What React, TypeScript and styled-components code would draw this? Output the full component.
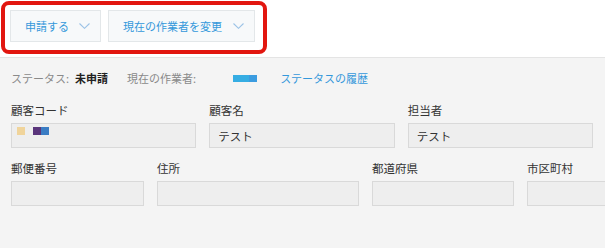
import React from 'react';
import styled, { createGlobalStyle } from 'styled-components';

const GlobalStyle = createGlobalStyle`
  html, body {
    margin: 0;
    padding: 0;
    background: #f4f4f4;
    font-family: "Noto Sans CJK JP", "Noto Sans", sans-serif;
    color: #333;
  }
`;

const Page = styled.div`
  width: 605px;
  height: 248px;
  overflow: hidden;
  background: #f4f4f4;
`;

const Toolbar = styled.div`
  position: relative;
  display: flex;
  gap: 7px;
  height: 58px;
  box-sizing: border-box;
  padding: 10px 10px 0;
  background: #fff;
  border-bottom: 1px solid #e4e4e4;
`;

// annotation frame drawn over the toolbar buttons
const Highlight = styled.div`
  position: absolute;
  left: 1px;
  top: 1px;
  width: 266px;
  height: 53px;
  box-sizing: border-box;
  border: 4px solid #e2160f;
  border-radius: 8px;
  pointer-events: none;
`;

const ActionButton = styled.button<{ width: number }>`
  display: flex;
  align-items: center;
  justify-content: space-between;
  width: ${(p) => p.width}px;
  height: 32px;
  box-sizing: border-box;
  padding: 0 10px 0 14px;
  background: #f7f9fa;
  border: 1px solid #e3e7e9;
  color: #3498db;
  font-family: inherit;
  font-size: 11px;
  cursor: pointer;
`;

const Chevron = () => (
  <svg width="11" height="6" viewBox="0 0 11 6">
    <path d="M0.5 0.5 L5.5 5.3 L10.5 0.5" fill="none" stroke="#9cc3e6" strokeWidth="1.1" />
  </svg>
);

const StatusRow = styled.div`
  display: flex;
  align-items: center;
  height: 40px;
  padding: 0 11px;
  font-size: 11px;
`;

const StatusLabel = styled.span<{ gap?: number }>`
  color: #8a8a8a;
  margin-right: ${(p) => p.gap ?? 6}px;
`;

const StatusValue = styled.span`
  color: #222;
  font-weight: bold;
  margin-right: 19px;
`;

const Assignee = styled.span`
  display: inline-flex;
  width: 24px;
  height: 7px;
  margin-right: 23px;
  background: linear-gradient(to right, #36ade3 0 16px, #3b9ce0 16px);
`;

const HistoryLink = styled.a`
  color: #3498db;
  text-decoration: none;
  cursor: pointer;
`;

const Form = styled.div`
  display: flex;
  flex-direction: column;
  gap: 12px;
  padding: 4px 12px 0 11px;
`;

const FieldRow = styled.div<{ columns: string }>`
  display: grid;
  grid-template-columns: ${(p) => p.columns};
  column-gap: 13px;
`;

const Field = styled.div`
  display: flex;
  flex-direction: column;
  gap: 5px;
  min-width: 0;
`;

const Label = styled.label`
  font-size: 11.5px;
  line-height: 16px;
  color: #333;
`;

const Input = styled.div`
  display: flex;
  align-items: center;
  gap: 8px;
  height: 25px;
  box-sizing: border-box;
  padding: 0 8px;
  background: #eeeeee;
  border: 1px solid #d9d9d9;
  font-size: 11.5px;
  color: #333;
`;

const CodeRow = styled.div`
  display: flex;
  align-self: flex-start;
  margin-top: 3px;
  margin-left: -3px;
  gap: 8px;
`;

const Swatch = styled.span<{ color: string }>`
  display: inline-block;
  width: 8px;
  height: 8px;
  background: ${(p) => p.color};
`;

const SwatchPair = styled.span`
  display: flex;
`;

export default function App() {
  return (
    <Page>
      <GlobalStyle />
      <Toolbar>
        <ActionButton width={91}>
          申請する
          <Chevron />
        </ActionButton>
        <ActionButton width={147}>
          現在の作業者を変更
          <Chevron />
        </ActionButton>
        <Highlight />
      </Toolbar>

      <StatusRow>
        <StatusLabel>ステータス:</StatusLabel>
        <StatusValue>未申請</StatusValue>
        <StatusLabel gap={37}>現在の作業者:</StatusLabel>
        <Assignee />
        <HistoryLink>ステータスの履歴</HistoryLink>
      </StatusRow>

      <Form>
        <FieldRow columns="1fr 1fr 1fr">
          <Field>
            <Label>顧客コード</Label>
            <Input>
              <CodeRow>
                <Swatch color="#f0d49b" />
                <SwatchPair>
                  <Swatch color="#5a357b" />
                  <Swatch color="#3a7cc3" />
                </SwatchPair>
              </CodeRow>
            </Input>
          </Field>
          <Field>
            <Label>顧客名</Label>
            <Input>テスト</Input>
          </Field>
          <Field>
            <Label>担当者</Label>
            <Input>テスト</Input>
          </Field>
        </FieldRow>

        <FieldRow columns="133px 202px 142px 142px">
          <Field>
            <Label>郵便番号</Label>
            <Input />
          </Field>
          <Field>
            <Label>住所</Label>
            <Input />
          </Field>
          <Field>
            <Label>都道府県</Label>
            <Input />
          </Field>
          <Field>
            <Label>市区町村</Label>
            <Input />
          </Field>
        </FieldRow>
      </Form>
    </Page>
  );
}
